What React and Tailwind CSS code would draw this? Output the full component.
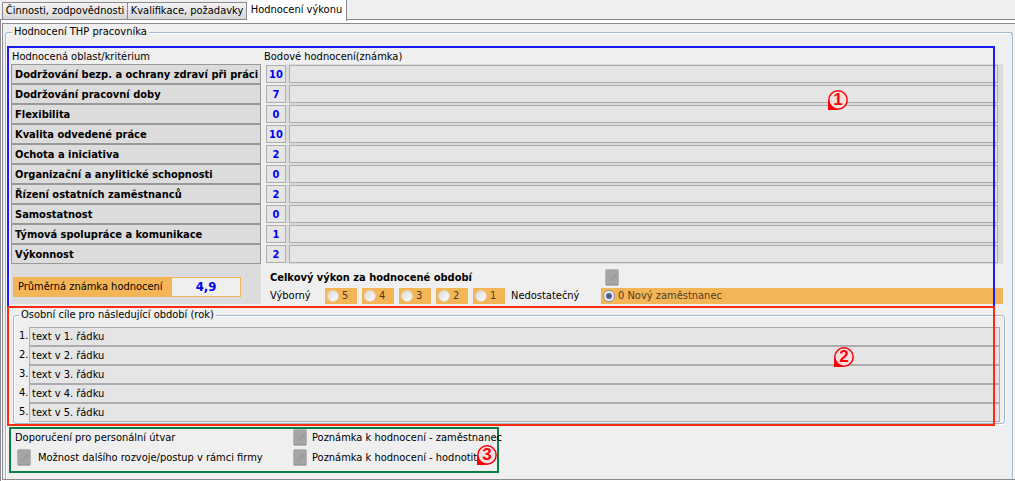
import React from 'react';

const criteria = [
  { name: 'Dodržování bezp. a ochrany zdraví při práci', score: 10 },
  { name: 'Dodržování pracovní doby', score: 7 },
  { name: 'Flexibilita', score: 0 },
  { name: 'Kvalita odvedené práce', score: 10 },
  { name: 'Ochota a iniciativa', score: 2 },
  { name: 'Organizační a anylitické schopnosti', score: 0 },
  { name: 'Řízení ostatních zaměstnanců', score: 2 },
  { name: 'Samostatnost', score: 0 },
  { name: 'Týmová spolupráce a komunikace', score: 1 },
  { name: 'Výkonnost', score: 2 },
];

const goals = [1, 2, 3, 4, 5];

// Numbered red marker, square in its bottom left corner
const Marker = ({ number, className }) => (
  <span className={`absolute size-5 text-[17px] leading-5 font-black text-center text-[#fb0007] font-['Liberation_Sans'] ${className}`}>
    <svg viewBox="0 0 20 20" className="absolute inset-0 size-5" aria-hidden="true">
      <circle cx="10" cy="10" r="9.2" fill="#f2e0e0" stroke="#fb0007" strokeWidth="1.5" />
      <path d="M0 10V20H10L3.5 16.5Z" fill="#fb0007" />
    </svg>
    <span className="relative">{number}</span>
  </span>
);

const NoteButton = ({ label }) => (
  <button type="button" aria-label={label} className="block h-[17px] w-[14px] shrink-0">
    <svg viewBox="0 0 14 17" className="block h-[17px] w-[14px]" aria-hidden="true">
      <rect x="0.5" y="0.5" width="13" height="16" rx="1.5" fill="#a5a5a5" stroke="#b5b5b5" />
      <path d="M1 15.5H13" stroke="#989898" />
      <path d="M5 11.5L10 6.5" stroke="#8c8c8c" />
      <path d="M8.5 6H11V8.5" fill="none" stroke="#949494" />
    </svg>
  </button>
);

const GradeRadio = ({ value, label, checked, className }) => (
  <label className={`flex h-4 items-center gap-[3px] bg-[#f4b556] pl-[2px] text-[#4c3c22] ${className}`}>
    <input
      type="radio"
      name="grade"
      value={value}
      defaultChecked={checked}
      className="size-3 appearance-none rounded-full border border-[#e3d5bd] bg-linear-to-br from-[#d9d9d9] to-white checked:border-[#7b8bab] checked:bg-[radial-gradient(circle,#4b5c88_0_2px,#8e9dbd_3px,#ffffff_4px)]"
    />
    <span>{label}</span>
  </label>
);

function App() {
  return (
    <div className="bg-[#efefef] font-['DejaVu_Sans_Condensed','DejaVu_Sans',sans-serif] text-[11px] leading-[14px] text-black whitespace-nowrap">
      {/* Tabs */}
      <div role="tablist" className="flex h-[19px] items-start pl-[2px]">
        <button type="button" role="tab" aria-selected="false" className="mt-[2px] h-[17px] w-[126px] border border-b-0 border-[#8b8a92] bg-linear-to-b from-[#f4f4f4] to-[#d6d6d6]">
          Činnosti, zodpovědnosti
        </button>
        <button type="button" role="tab" aria-selected="false" className="mt-[2px] h-[17px] w-[119px] border border-b-0 border-l-0 border-[#8b8a92] bg-linear-to-b from-[#f4f4f4] to-[#d6d6d6]">
          Kvalifikace, požadavky
        </button>
        <button type="button" role="tab" aria-selected="true" className="relative z-10 h-[21px] w-[100px] border-r border-[#8b8a92] bg-white pb-[2px]">
          Hodnocení výkonu
        </button>
      </div>

      <div className="border-t border-l border-[#8b8a92] bg-white pt-[3px] pb-px pl-px">
        <div className="border-y border-l border-[#8b8a92] bg-[#efefef] pt-px pr-[2px] pl-[2px]">
          <fieldset className="min-w-0 rounded-t-[3px] border border-b-0 border-[#a0b8d0] pb-[6px] pl-px shadow-[1px_0_0_#fff,inset_1px_1px_0_#fff]">
            <legend className="ml-[5px] bg-[#efefef] px-[2px]">Hodnocení THP pracovníka</legend>

            {/* Criteria and scores */}
            <section className="relative mt-[7px] flex gap-[3px] pt-1 pr-[9px] pb-[2px] pl-1">
              <div className="flex w-[250px] shrink-0 flex-col">
                <h2 className="pl-px">Hodnocená oblast/kritérium</h2>
                <div className="flex-1 bg-[#dcdcdc]">
                  {criteria.map((item, i) => (
                    <label key={item.name} htmlFor={`score-${i}`} className="block h-5 border border-[#999] pl-[3px] leading-5 font-bold">
                      {item.name}
                    </label>
                  ))}
                  <div className="mt-[13px] mr-5 ml-[2px] flex h-5 border border-[#f4b556] bg-[#f4b556]">
                    <label htmlFor="average" className="w-[158px] pl-1 leading-[18px]">Průměrná známka hodnocení</label>
                    <input id="average" readOnly defaultValue="4,9" className="w-0 min-w-0 flex-1 bg-[#efefef] text-center text-[13px] font-bold text-[#0000f5]" />
                  </div>
                </div>
              </div>

              <div className="min-w-0 flex-1">
                <h2>Bodové hodnocení(známka)</h2>
                {criteria.map((item, i) => (
                  <div key={item.name} className="flex h-5 pl-[2px]">
                    <input id={`score-${i}`} readOnly defaultValue={item.score} className="mt-px h-[18px] w-5 border border-[#adadb1] bg-[#e5e5e5] text-center font-bold text-[#0000f5]" />
                    <div className="flex-1 bg-[#dcdcdc] pt-px pr-[5px] pl-[3px]">
                      <input aria-label={item.name} readOnly className="block h-[18px] w-full border border-[#adadb1] bg-[#e5e5e5] px-1" />
                    </div>
                  </div>
                ))}
                <div className="mt-[5px] flex items-center pl-[6px]">
                  <h3 className="w-[335px] font-bold">Celkový výkon za hodnocené období</h3>
                  <NoteButton label="Poznámka k celkovému výkonu" />
                </div>
                <div className="mt-[2px] flex items-center pl-[6px]">
                  <span className="w-[55px]">Výborný</span>
                  <div className="flex gap-[5px]">
                    {[5, 4, 3, 2, 1].map((grade) => (
                      <GradeRadio key={grade} value={grade} label={grade} className="w-8" />
                    ))}
                  </div>
                  <span className="w-24 pl-[6px]">Nedostatečný</span>
                  <GradeRadio value={0} label="0 Nový zaměstnanec" checked className="flex-1" />
                </div>
              </div>

              <div className="pointer-events-none absolute top-0 right-[17px] -bottom-[2px] left-0 border-2 border-[#1a1aff]">
                <Marker number={1} className="top-[42px] right-[145px]" />
              </div>
            </section>

            {/* Personal goals */}
            <section className="relative pt-[2px] pr-[7px] pb-[2px] pl-[6px]">
              <fieldset className="min-w-0 rounded-[3px] border border-[#a0b8d0] pt-[5px] pr-1 pb-px pl-[3px] shadow-[1px_1px_0_#fff,inset_1px_1px_0_#fff]">
                <legend className="ml-[2px] bg-[#efefef] px-[2px]">Osobní cíle pro následující období (rok)</legend>
                {goals.map((n) => (
                  <div key={n} className="flex h-[19px]">
                    <label htmlFor={`goal-${n}`} className="w-3 pl-[2px] leading-[18px]">{n}.</label>
                    <input id={`goal-${n}`} defaultValue={`text v ${n}. řádku`} className="h-[19px] min-w-0 flex-1 border border-[#adadb1] bg-[#e5e5e5] px-[2px]" />
                  </div>
                ))}
              </fieldset>
              <div className="pointer-events-none absolute top-0 right-[17px] bottom-0 left-0 border-2 border-[#ff2a12]">
                <Marker number={2} className="top-[39px] right-[139px]" />
              </div>
            </section>

            {/* Recommendations */}
            <section className="relative mt-px ml-[2px] grid w-[490px] grid-cols-[282px_1fr] gap-y-[3px] border-2 border-[#0b8046] pb-[5px]">
              <div className="pl-1 leading-[17px]">Doporučení pro personální útvar</div>
              <div className="flex items-center gap-[5px]">
                <NoteButton label="Otevřít poznámku zaměstnance" />
                <span>Poznámka k hodnocení - zaměstnanec</span>
              </div>
              <div className="flex items-center gap-[7px] pl-[6px]">
                <NoteButton label="Otevřít možnost rozvoje" />
                <span>Možnost dalšího rozvoje/postup v rámci firmy</span>
              </div>
              <div className="flex items-center gap-[5px]">
                <NoteButton label="Otevřít poznámku hodnotitele" />
                <span>Poznámka k hodnocení - hodnotitel</span>
              </div>
              <Marker number={3} className="top-4 right-0" />
            </section>
          </fieldset>
        </div>
      </div>
    </div>
  );
}

export default App;
